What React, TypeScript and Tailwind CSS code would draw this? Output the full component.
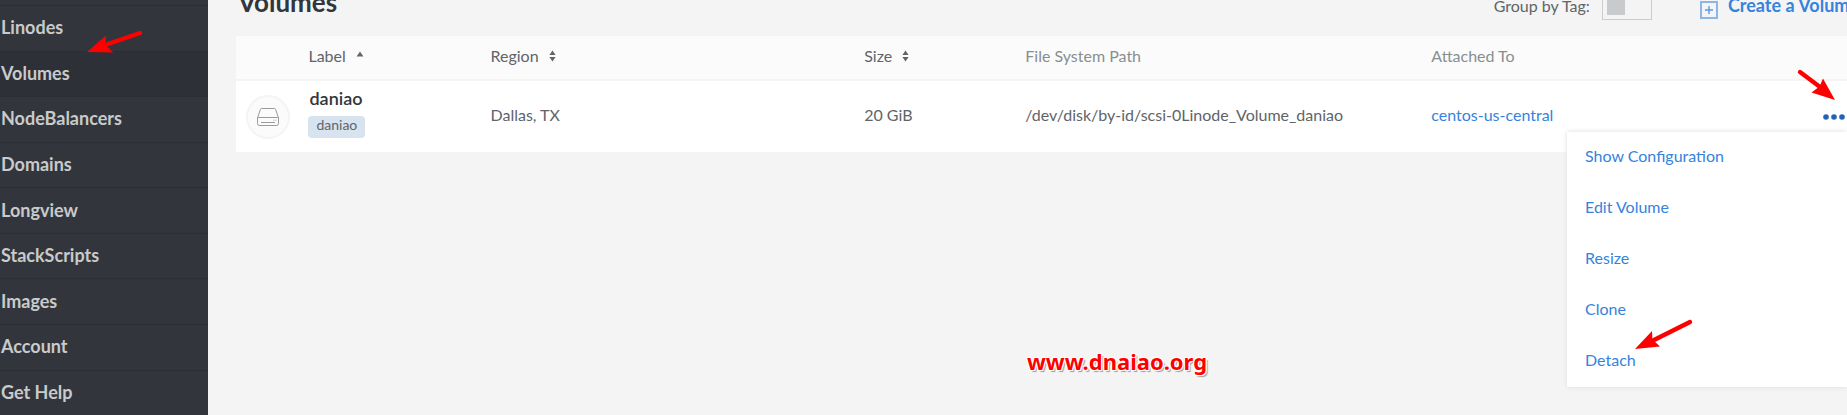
import type { ReactNode } from 'react';

const navItems = [
  'Linodes',
  'Volumes',
  'NodeBalancers',
  'Domains',
  'Longview',
  'StackScripts',
  'Images',
  'Account',
  'Get Help',
];

const menuItems = ['Show Configuration', 'Edit Volume', 'Resize', 'Clone', 'Detach'];

function Sidebar() {
  return (
    <nav className="flex w-52 shrink-0 flex-col bg-[#32363c] pt-[5px]">
      {navItems.map((item) => (
        <a
          key={item}
          href="#"
          aria-current={item === 'Volumes' ? 'page' : undefined}
          className={`flex flex-1 items-center border-t border-[#2b2e33] pb-0.5 pl-px text-[18px] leading-none font-bold text-[#c9cacb] ${
            item === 'Volumes' ? 'bg-[#2d3037]' : ''
          }`}
        >
          {item}
        </a>
      ))}
    </nav>
  );
}

function SortBoth() {
  return (
    <svg width="7" height="12" viewBox="0 0 7 12" fill="#606469" aria-hidden="true">
      <path d="M3.5 0.5 6.6 5H0.4z M3.5 11.5 6.6 7H0.4z" />
    </svg>
  );
}

function SortUp() {
  return (
    <svg width="8" height="12" viewBox="0 0 8 12" fill="#606469" aria-hidden="true">
      <path d="M4 1.5 7.4 6.5H0.6z" />
    </svg>
  );
}

function SortButton({ label, icon }: { label: string; icon: ReactNode }) {
  return (
    <button type="button" className="flex items-center gap-2.5 text-[#606469]">
      {label}
      {icon}
    </button>
  );
}

function VolumeIcon() {
  return (
    <span className="flex size-11 items-center justify-center rounded-full border-2 border-[#f4f4f4] bg-[#fbfbfb]">
      <svg width="24" height="20" viewBox="0 0 24 20" fill="none" stroke="#999b9d" aria-hidden="true">
        <path d="M1.5 11 4.3 2.6Q4.7 1.5 5.8 1.5H18.2Q19.3 1.5 19.7 2.6L22.5 11V16.5Q22.5 18.5 20.5 18.5H3.5Q1.5 18.5 1.5 16.5Z" />
        <path d="M1.5 11Q2 10.5 3 10.5H21Q22 10.5 22.5 11M5 15.5H19M17.5 13.2H18.3M19.5 13.2H20.3" />
      </svg>
    </span>
  );
}

function ActionMenu() {
  return (
    <div className="absolute top-full right-0 z-10 mt-[3px] w-70 bg-white shadow-[0_0_5px_#ddd]">
      {menuItems.map((item) => (
        <button
          key={item}
          type="button"
          className="flex h-[51px] w-full items-center px-[18px] pb-0.5 text-[#3683dc]"
        >
          {item}
        </button>
      ))}
    </div>
  );
}

function VolumesTable() {
  return (
    <table className="w-full table-fixed border-collapse text-left text-[16px] leading-5 text-[#606469]">
      <colgroup>
        <col className="w-[4%]" />
        <col className="w-[11.3%]" />
        <col className="w-[23.2%]" />
        <col className="w-[10%]" />
        <col className="w-[25.2%]" />
        <col />
        <col className="w-10" />
      </colgroup>
      <thead>
        <tr className="h-11 border-b-2 border-[#f4f4f4] bg-[#fbfbfb] text-[#888f91]">
          <td />
          <th className="px-2 pb-1 font-normal"><SortButton label="Label" icon={<SortUp />} /></th>
          <th className="px-2 pb-1 font-normal"><SortButton label="Region" icon={<SortBoth />} /></th>
          <th className="px-2 pb-1 font-normal"><SortButton label="Size" icon={<SortBoth />} /></th>
          <th className="px-2 pb-1 font-normal">File System Path</th>
          <th className="px-2 pb-1 font-normal">Attached To</th>
          <td />
        </tr>
      </thead>
      <tbody>
        <tr className="h-18 bg-white">
          <td className="pl-2.5"><VolumeIcon /></td>
          <td className="px-2 pb-2">
            <div className="flex flex-col items-start gap-2">
              <a href="#" className="pl-px text-[18px] leading-5 font-semibold text-[#32363c]">daniao</a>
              <span className="rounded bg-[#d7e3ef] px-2 pb-1 text-[14px] leading-[18px]">daniao</span>
            </div>
          </td>
          <td className="px-2 pb-1">Dallas, TX</td>
          <td className="px-2 pb-1">20 GiB</td>
          <td className="px-2 pb-1 whitespace-nowrap">/dev/disk/by-id/scsi-0Linode_Volume_daniao</td>
          <td className="px-2 pb-1"><a href="#" className="text-[#3683dc]">centos-us-central</a></td>
          <td>
            <div className="relative flex justify-end">
              <button type="button" aria-label="Action menu" className="flex h-6 items-center pr-0.5">
                <svg width="22" height="6" viewBox="0 0 22 6" fill="#1f64b6" aria-hidden="true">
                  <circle cx="3" cy="3" r="2.8" />
                  <circle cx="11" cy="3" r="2.8" />
                  <circle cx="19" cy="3" r="2.8" />
                </svg>
              </button>
              <ActionMenu />
            </div>
          </td>
        </tr>
      </tbody>
    </table>
  );
}

function PageHeader() {
  return (
    <header className="-mt-6 flex h-15 items-center justify-between">
      <h1 className="pb-2 pl-0.5 text-[26px] leading-8 font-bold text-[#32363c]">Volumes</h1>
      <div className="-mr-3 flex shrink-0 items-center whitespace-nowrap">
        <label htmlFor="group-by-tag" className="text-[16px] leading-5 text-[#606469]">Group by Tag:</label>
        <button
          id="group-by-tag"
          type="button"
          role="switch"
          aria-checked="false"
          className="ml-3 flex h-7 w-[50px] items-center border border-[#ccc] pl-1"
        >
          <span className="size-[18px] bg-[#c9cacb]" />
        </button>
        <button type="button" className="ml-12 flex items-end gap-2.5 text-[18px] leading-6 font-bold text-[#3683dc]">
          <svg width="18" height="18" viewBox="0 0 18 18" fill="none" stroke="#3683dc" aria-hidden="true">
            <path d="M1 1H17V17H1Z" strokeWidth="2" opacity="0.55" />
            <path d="M9 5V13M5 9H13" strokeWidth="1.4" opacity="0.8" />
          </svg>
          <span className="pb-0.5">Create a Volume</span>
        </button>
      </div>
    </header>
  );
}

function Annotations() {
  return (
    <div className="pointer-events-none absolute inset-0 z-20">
      <svg className="absolute top-[30px] left-[86px]" width="58" height="26" viewBox="0 0 58 26" aria-hidden="true">
        <path d="M54 3 22 14" stroke="#f00" strokeWidth="4.4" strokeLinecap="round" />
        <path d="M1 22 20 5.5 19.5 14.5 27 22.5Z" fill="#f00" />
      </svg>
      <svg className="absolute top-[68px] right-[10px]" width="42" height="34" viewBox="0 0 42 34" aria-hidden="true">
        <path d="M5 4 25 19" stroke="#f00" strokeWidth="4.4" strokeLinecap="round" />
        <path d="M40 32 28 10.5 24.5 18.5 16.5 24.5Z" fill="#f00" />
      </svg>
      <svg className="absolute top-[318px] right-[153px]" width="60" height="32" viewBox="0 0 60 32" aria-hidden="true">
        <path d="M56 4 20 22" stroke="#f00" strokeWidth="4.4" strokeLinecap="round" />
        <path d="M1 31 18 13 18.5 21.5 26 28.5Z" fill="#f00" />
      </svg>
      <p className="absolute top-[346px] left-[1027px] font-['Noto_Sans',sans-serif] text-[22px] leading-[30px] font-bold text-[#f00] [text-shadow:0_0_2px_#fff,1px_1px_0_#fff,-1px_-1px_0_#fff,1px_-1px_0_#fff,-1px_1px_0_#fff,2px_2px_1px_#999]">
        www.dnaiao.org
      </p>
    </div>
  );
}

export default function App() {
  return (
    <div className="relative flex h-screen overflow-hidden bg-[#f4f4f4] font-['Lato',sans-serif]">
      <Sidebar />
      <main className="min-w-0 flex-1 pl-7">
        <PageHeader />
        <VolumesTable />
      </main>
      <Annotations />
    </div>
  );
}
